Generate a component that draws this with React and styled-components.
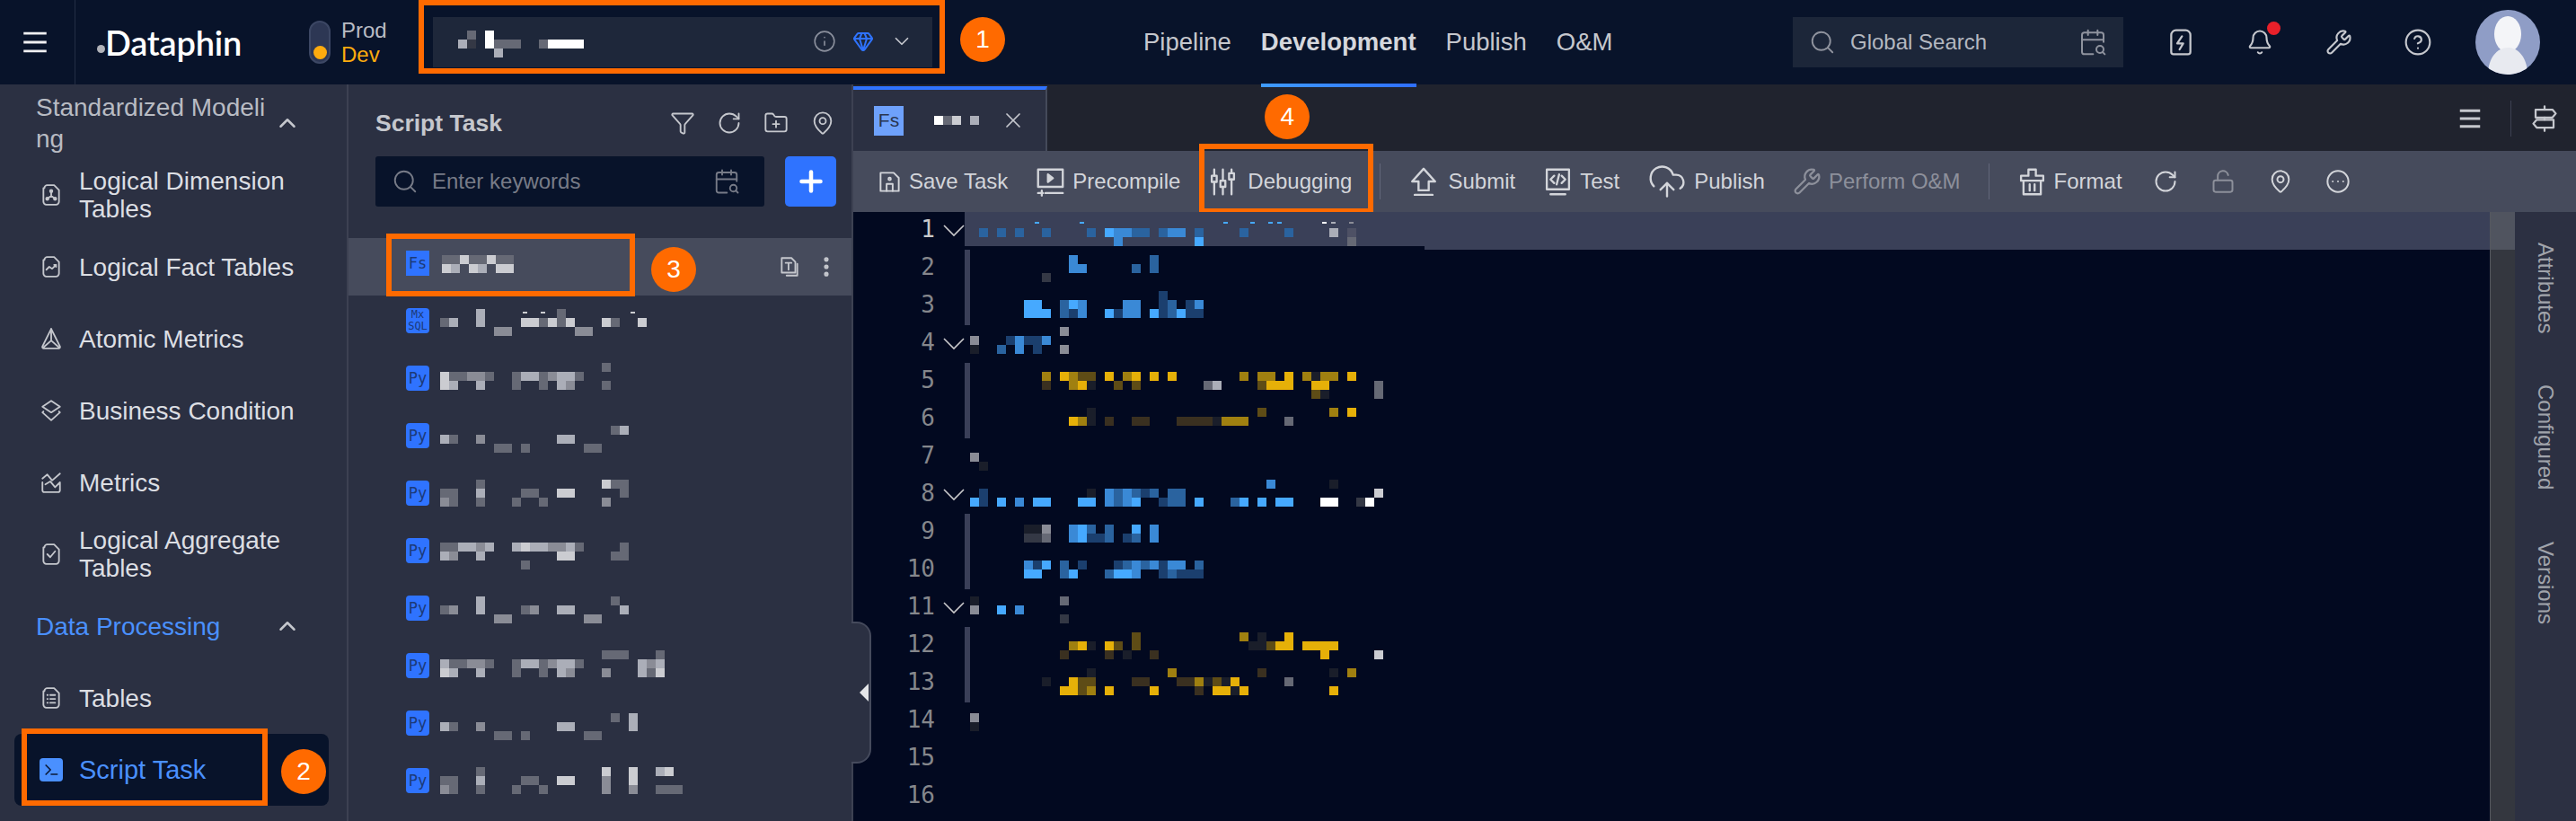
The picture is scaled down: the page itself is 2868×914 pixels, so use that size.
import React from "react";
import styled, { createGlobalStyle } from "styled-components";
import {
  Info, Gem, ChevronDown, ChevronUp, Search, CalendarSearch, Bell, Wrench, CircleHelp,
  Funnel, RotateCw, FolderPlus, MapPin, Plus, X, EllipsisVertical, CloudUpload,
  LockOpen, CircleEllipsis,
} from "lucide-react";

const GlobalStyle = createGlobalStyle`
  html, body { margin: 0; height: 100%; overflow: hidden; background: #2b3042; }
  body { font-family: "Liberation Sans", Arial, sans-serif; }
  * { box-sizing: border-box; }
`;

// mosaic colours: a-d blue, e-l grey, w-z yellow; an uppercase token is a thin tick
const palette = {
  a: "#1b3f6e", b: "#2a639f", c: "#3a89d6", d: "#46a9ff",
  e: "#1a1e2a", f: "#343845", g: "#666975", h: "#8a8c96", i: "#abaeb8", j: "#cbccd1", k: "#ffffff", l: "#4e5165",
  w: "#3a3020", x: "#5e4c16", y: "#a08010", z: "#e6b008",
};

const MosaicSvg = styled.svg`
  display: block;
  flex-shrink: 0;
  margin-top: ${(p) => p.$top || 0}px;
  margin-left: ${(p) => p.$left || 0}px;
`;

const Mosaic = ({ rows, top, left }) => {
  const cells = rows.flatMap((row, y) =>
    row.split(" ").filter(Boolean).map((token) => {
      const code = token[token.length - 1];
      const tick = code !== code.toLowerCase();
      return { x: parseInt(token, 10), y, tick, fill: palette[code.toLowerCase()] };
    })
  );
  const cols = Math.max(...cells.map((c) => c.x)) + 1;
  return (
    <MosaicSvg width={cols * 10} height={rows.length * 10} $top={top} $left={left} shapeRendering="crispEdges">
      {cells.map((c) => (
        <rect
          key={`${c.x}-${c.y}`}
          x={c.x * 10 + (c.tick ? 2 : 0)}
          y={c.y * 10 + (c.tick ? 3 : 0)}
          width={c.tick ? 5 : 10}
          height={c.tick ? 2 : 10}
          fill={c.fill}
        />
      ))}
    </MosaicSvg>
  );
};

const Glyph = ({ size = 28, w = 1.7, children, color = "currentColor" }) => (
  <svg width={size} height={size} viewBox="0 0 24 24" fill="none" stroke={color} strokeWidth={w} strokeLinejoin="round" strokeLinecap="round">
    {children}
  </svg>
);

const DOC = "M5 5a3 3 0 0 1 3-3h7l5 5v12a3 3 0 0 1-3 3H7a3 3 0 0 1-3-3V5z";

const icons = {
  tree: <><path d={DOC} /><path d="M12 8v5M12 13l-4 3M12 13l4 3" /><circle cx="12" cy="8" r="1.2" /><circle cx="8" cy="16" r="1.2" /><circle cx="16" cy="16" r="1.2" /></>,
  chartDoc: <><path d={DOC} /><path d="M7 15l3-3 3 2 4-4M15 10h2v2" /></>,
  atomic: <><path d="M12 2L3 20a1.5 1.5 0 0 0 1 2h16a1.5 1.5 0 0 0 1-2z" /><path d="M12 2v12L4 21M12 14l8 7" /></>,
  layers: <><path d="M12 2l9 6-9 6-9-6z" /><path d="M4 13l-1 1 9 8 9-8-1-1" /></>,
  metrics: <><path d="M3 12v8a2 2 0 0 0 2 2h14a2 2 0 0 0 2-2v-8l-5 5-5-6-5 3" /><path d="M3 8l5-4 5 6 8-7" /></>,
  checkDoc: <><path d={DOC} /><path d="M8 12l3 3 5-6" /></>,
  listDoc: <><path d={DOC} /><path d="M8 9h.5M11 9h5M8 13h.5M11 13h5M8 17h.5M11 17h5" /></>,
  save: <><path d="M3 3h13l5 5v13H3z" /><path d="M9 21v-7h6v7" /><circle cx="12" cy="9" r="1.2" /></>,
  precompile: <><rect x="2" y="2" width="20" height="14" /><path d="M10 6l4 3-4 3z" fill="currentColor" /><path d="M2 21h4M5 19v4M8 21h14" /></>,
  debug: <><path d="M5 2v5M5 12v10M12 2v9M12 16v6M19 2v3M19 10v12" /><rect x="3" y="7" width="4" height="5" /><rect x="10" y="11" width="4" height="5" /><rect x="17" y="5" width="4" height="5" /></>,
  submit: <><path d="M12 2l9 10h-5v7H8v-7H3z" /><path d="M5 22.5h14" /></>,
  test: <><rect x="3" y="2" width="18" height="16" /><path d="M9 7l-3 3 3 3M15 7l3 3-3 3M13 6l-2 8M6 22h12" /></>,
  format: <><path d="M9 2h6v5h6v4H3V7h6z" /><path d="M5 11v11h14V11M10 14v5M14 14v5" /></>,
  bolt: <><path d="M8 2h8a4 4 0 0 1 4 4v14a2 2 0 0 1-2 2H6a2 2 0 0 1-2-2V6a4 4 0 0 1 4-4z" /><path d="M13 7l-4 6h5l-3 5" /></>,
  copyT: <><path d="M4 3h10l4 4v11H4z" /><path d="M8 8h6M11 8v7M20 9v12H9" /></>,
  burger: <path d="M3 5h18M3 12h18M3 19h18" strokeLinecap="butt" />,
  signpost: <><path d="M12 1v3M12 11v2M12 20v3" /><path d="M4 4h15l3 3.5-3 3.5H4z" /><path d="M5 13h15v7H5l-3-3.5z" /></>,
};

const Shell = styled.div`
  display: flex;
  flex-direction: column;
  height: 100vh;
`;

const Header = styled.header`
  display: flex;
  align-items: center;
  height: 94px;
  flex-shrink: 0;
  background: #08132a;
  color: #c5c7cd;
`;

const MenuCell = styled.div`
  display: flex;
  align-items: center;
  justify-content: center;
  width: 84px;
  height: 100%;
  padding-right: 6px;
  color: #f0f0f2;
  border-right: 1px solid #232d44;
`;

const Logo = styled.div`
  display: flex;
  align-items: flex-end;
  margin-left: 24px;
  width: 160px;
  color: #fff;
  font-family: Lato, sans-serif;
  font-size: 38px;
  font-weight: 600;
  line-height: 46px;
  letter-spacing: -0.2px;
`;

const LogoDot = styled.span`
  width: 9px;
  height: 9px;
  margin: 0 0 11px 0;
  border-radius: 50%;
  background: #b0b2b8;
  flex-shrink: 0;
`;

const EnvTrack = styled.div`
  display: flex;
  align-items: flex-end;
  justify-content: center;
  width: 24px;
  height: 48px;
  margin-left: 76px;
  padding-bottom: 3px;
  border: 2px solid #3c4764;
  border-radius: 12px;
  background: #2d3754;
`;

const EnvKnob = styled.span`
  width: 15px;
  height: 15px;
  border-radius: 50%;
  background: #fdab0e;
`;

const EnvLabels = styled.div`
  display: flex;
  flex-direction: column;
  width: 52px;
  margin-left: 12px;
  font-size: 24px;
  line-height: 27px;
`;

const EnvLabel = styled.span`
  color: ${(p) => (p.$on ? "#fdab0e" : "#b9bcc4")};
`;

const Selector = styled.div`
  position: relative;
  display: flex;
  align-items: flex-start;
  gap: 18px;
  width: 556px;
  height: 56px;
  margin-left: 50px;
  padding: 15px 21px 0 28px;
  background: #1e273a;
`;

const SelectorIcons = styled.div`
  display: flex;
  align-items: center;
  gap: 18px;
  margin: -1px 0 0 auto;
  color: #8a8f9c;
`;

const Highlight = styled.div`
  position: absolute;
  top: ${(p) => p.$top}px;
  left: ${(p) => p.$left}px;
  width: ${(p) => p.$w}px;
  height: ${(p) => p.$h}px;
  border: 6px solid #ff6a00;
  pointer-events: none;
`;

const Step = styled.div`
  position: absolute;
  top: ${(p) => p.$top}px;
  left: ${(p) => p.$left}px;
  display: flex;
  align-items: center;
  justify-content: center;
  width: 50px;
  height: 50px;
  border-radius: 50%;
  background: #ff6a00;
  color: #fff;
  font-size: 28px;
`;

const Nav = styled.nav`
  display: flex;
  gap: 33px;
  height: 100%;
  margin-left: 235px;
`;

const NavItem = styled.a`
  position: relative;
  display: flex;
  align-items: center;
  font-size: 27.5px;
  font-weight: ${(p) => (p.$active ? 700 : 400)};
  color: ${(p) => (p.$active ? "#d5d7dc" : "#c5c7cd")};

  ${(p) =>
    p.$active &&
    `&::after {
      content: "";
      position: absolute;
      left: 0;
      right: 0;
      bottom: -3px;
      height: 4px;
      background: linear-gradient(90deg, #3f9cff, #2f6fff);
    }`}
`;

const HeaderRight = styled.div`
  display: flex;
  align-items: center;
  margin-left: auto;
  padding-right: 40px;
`;

const GlobalSearch = styled.div`
  display: flex;
  align-items: center;
  width: 368px;
  height: 56px;
  margin-right: 20px;
  padding: 0 18px;
  background: #1c2639;
  color: #8f939e;
`;

const GlobalSearchText = styled.span`
  flex: 1;
  margin-left: 16px;
  font-size: 24px;
  color: #b4b8c0;
`;

const HeaderIcon = styled.div`
  position: relative;
  display: flex;
  justify-content: center;
  width: 88px;
`;

const RedDot = styled.span`
  position: absolute;
  top: -8px;
  left: 52px;
  width: 15px;
  height: 15px;
  border-radius: 50%;
  background: #e8202a;
`;

const Avatar = styled.div`
  width: 72px;
  height: 72px;
  margin-left: 20px;
  border-radius: 50%;
  overflow: hidden;
  background: #8f9dc6;
`;

const Body = styled.div`
  display: flex;
  flex: 1;
  min-height: 0;
`;

const Sidebar = styled.aside`
  width: 388px;
  flex-shrink: 0;
  padding-top: 3px;
  background: #2b3042;
  border-right: 2px solid #3d4152;
  overflow: hidden;
`;

const Section = styled.div`
  display: grid;
  grid-template-columns: 265px 30px;
  align-items: center;
  height: 80px;
  padding-left: 40px;
  font-size: 28px;
  line-height: 35px;
  word-break: break-all;
  color: ${(p) => (p.$active ? "#4a90ff" : "#b8bbc3")};
  svg { color: #c5c7cd; }
`;

const SideItem = styled.div`
  display: flex;
  align-items: center;
  gap: 18px;
  height: 80px;
  padding-left: 44px;
  font-size: 28px;
  line-height: 31px;
  color: #dcdee3;
`;

const SideIcon = styled.span`
  display: flex;
  flex-shrink: 0;
  color: #c5c7cd;
`;

const SideText = styled.span`
  width: 270px;
`;

const ActiveItem = styled.div`
  position: relative;
  display: flex;
  align-items: center;
  gap: 18px;
  width: 350px;
  height: 80px;
  margin-left: 16px;
  padding-left: 28px;
  border-radius: 8px;
  background: #08132a;
  font-size: 29px;
  color: #4a90ff;
`;

const ScriptIcon = styled.span`
  display: flex;
  align-items: center;
  justify-content: center;
  width: 26px;
  height: 26px;
  border-radius: 4px;
  background: #4a90ff;
  color: #0b1a38;
`;

const TaskPanel = styled.section`
  width: 562px;
  flex-shrink: 0;
  background: #2b3042;
  border-right: 2px solid #3d4152;
  overflow: hidden;
`;

const PanelHead = styled.div`
  display: flex;
  align-items: center;
  height: 80px;
  padding: 6px 18px 0 30px;
`;

const PanelTitle = styled.h2`
  flex: 1;
  margin: 0;
  font-size: 26.5px;
  font-weight: 700;
  color: #c5c7cd;
`;

const PanelTools = styled.div`
  display: flex;
  gap: 24px;
  color: #c5c7cd;
`;

const SearchRow = styled.div`
  display: flex;
  gap: 23px;
  padding-left: 30px;
`;

const SearchBox = styled.div`
  display: flex;
  align-items: center;
  width: 433px;
  height: 56px;
  padding: 0 27px 0 18px;
  border-radius: 3px;
  background: #08132a;
  color: #777b87;
`;

const SearchInput = styled.input`
  flex: 1;
  min-width: 0;
  margin-left: 13px;
  border: 0;
  outline: 0;
  background: none;
  font: 24px "Liberation Sans", Arial, sans-serif;
  color: #c5c7cd;
  &::placeholder { color: #777b87; opacity: 1; }
`;

const AddButton = styled.button`
  display: flex;
  align-items: center;
  justify-content: center;
  width: 57px;
  height: 56px;
  padding: 0;
  border: 0;
  border-radius: 5px;
  background: #2f73ff;
  color: #fff;
`;

const TreeList = styled.div`
  margin-top: 35px;
`;

const TreeRow = styled.div`
  position: relative;
  display: flex;
  align-items: flex-start;
  gap: 12px;
  height: 64px;
  padding-left: 64px;
  background: ${(p) => (p.$selected ? "#464b5c" : "transparent")};
`;

const FileIcon = styled.span`
  display: flex;
  flex-direction: column;
  align-items: center;
  justify-content: center;
  flex-shrink: 0;
  width: 26px;
  height: 28px;
  margin-top: 14px;
  border-radius: ${(p) => (p.$square ? 0 : 4)}px;
  background: #2f73ff;
  color: #1c3a78;
  font-family: "DejaVu Sans Mono", monospace;
  font-size: ${(p) => (p.$small ? 12 : 17)}px;
  line-height: ${(p) => (p.$small ? 13 : 20)}px;
`;

const TreeActions = styled.div`
  display: flex;
  align-items: center;
  gap: 14px;
  margin: 18px 14px 0 auto;
  color: #c5c7cd;
`;

const Main = styled.main`
  display: flex;
  flex-direction: column;
  flex: 1;
  min-width: 0;
`;

const TabBar = styled.div`
  display: flex;
  align-items: stretch;
  justify-content: space-between;
  height: 74px;
  flex-shrink: 0;
  padding-top: 2px;
  background: #20232e;
`;

const Tab = styled.div`
  display: flex;
  align-items: center;
  width: 216px;
  padding-left: 23px;
  border-top: 4px solid #2f73ff;
  border-right: 2px solid #444a5a;
  background: #2b3042;
  color: #c5c7cd;
`;

const TabIcon = styled.span`
  display: flex;
  align-items: center;
  justify-content: center;
  flex-shrink: 0;
  width: 33px;
  height: 33px;
  background: #6ea1fb;
  color: #2a3550;
  font-family: "Liberation Sans", Arial, sans-serif;
  font-size: 21px;
`;

const TabTitle = styled.div`
  margin-left: 34px;
  width: 74px;
`;

const TabRight = styled.div`
  display: flex;
  align-items: center;
  padding-right: 20px;
  color: #c5c7cd;
`;

const TabDivider = styled.span`
  width: 1px;
  height: 40px;
  margin: 0 22px 0 30px;
  background: #3d4152;
`;

const Toolbar = styled.div`
  display: flex;
  align-items: center;
  gap: 31px;
  height: 68px;
  flex-shrink: 0;
  padding-left: 27px;
  background: #464b5c;
`;

const ToolItem = styled.div`
  position: relative;
  display: flex;
  align-items: center;
  gap: ${(p) => p.$gap || 8}px;
  font-size: 24px;
  color: ${(p) => (p.$muted ? "#8d909b" : "#d3d5da")};
`;

const ToolDivider = styled.span`
  width: 1px;
  height: 40px;
  background: #62667a;
`;

const ToolIcons = styled.div`
  display: flex;
  align-items: center;
  gap: 36px;
  margin-left: 3px;
  color: #d3d5da;
`;

const EditorArea = styled.div`
  position: relative;
  display: flex;
  flex: 1;
  min-height: 0;
  background: #020920;
`;

const Code = styled.div`
  flex: 1;
  min-width: 0;
  overflow: hidden;
`;

const Line = styled.div`
  display: flex;
  height: 42px;
`;

const LineNo = styled.span`
  width: 91px;
  flex-shrink: 0;
  text-align: right;
  font-family: "DejaVu Sans Mono", monospace;
  font-size: 26px;
  line-height: 38px;
  color: ${(p) => (p.$active ? "#c9c9cb" : "#85878c")};
`;

const FoldCell = styled.span`
  display: flex;
  align-items: center;
  justify-content: flex-end;
  width: 33px;
  flex-shrink: 0;
  color: #c9c9cb;
`;

const LineBody = styled.div`
  position: relative;
  display: flex;
  flex: 1;
  min-width: 0;
  background: ${(p) => (p.$active ? "#3a4058" : "transparent")};

  ${(p) =>
    p.$active &&
    `&::after {
      content: "";
      position: absolute;
      left: 0;
      bottom: 0;
      width: 512px;
      height: 4px;
      background: #020920;
    }`}
`;

const Guide = styled.span`
  width: 6px;
  flex-shrink: 0;
  background: ${(p) => (p.$on ? "#3a3f58" : "transparent")};
`;

const ScrollStrip = styled.div`
  width: 28px;
  flex-shrink: 0;
  border-left: 1px solid #55585f;
  background: linear-gradient(#50545f 42px, #34373f 42px);
`;

const SideTabs = styled.div`
  display: flex;
  flex-direction: column;
  align-items: center;
  gap: 57px;
  width: 68px;
  flex-shrink: 0;
  padding-top: 34px;
  background: #2c3042;
`;

const SideTab = styled.span`
  writing-mode: vertical-rl;
  font-size: 24px;
  line-height: 28px;
  color: #a0a3ab;
`;

const CollapseHandle = styled.div`
  position: absolute;
  top: 456px;
  left: -2px;
  display: flex;
  align-items: center;
  justify-content: flex-end;
  width: 22px;
  height: 158px;
  padding-right: 1px;
  border: 2px solid #454a5c;
  border-left: 0;
  border-radius: 0 16px 16px 0;
  background: #2b3042;
  color: #e4e5e8;
`;

const HandleArrow = styled.span`
  width: 0;
  height: 0;
  border-top: 10px solid transparent;
  border-bottom: 10px solid transparent;
  border-right: 10px solid currentColor;
`;

const FoldMark = () => (
  <svg width="24" height="14" viewBox="0 0 24 14" fill="none" stroke="currentColor" strokeWidth="1.6">
    <path d="M1 1l11 11L23 1" />
  </svg>
);

const sideItems = [
  { icon: "tree", label: "Logical Dimension Tables" },
  { icon: "chartDoc", label: "Logical Fact Tables" },
  { icon: "atomic", label: "Atomic Metrics" },
  { icon: "layers", label: "Business Condition" },
  { icon: "metrics", label: "Metrics" },
  { icon: "checkDoc", label: "Logical Aggregate Tables" },
];

const tasks = [
  { type: "Mx", top: 15, rows: ["4i 9J 11J 13g 21J", "0g 1i 4i 9j 10j 11g 12j 13g 14j 18j 19g 22j", "6h 7h 15h 16h"] },
  { type: "Py", top: 11, rows: ["18g", "0j 1g 2g 3h 4h 5g 8g 9i 10i 11g 12h 13i 14i 15g", "0j 1i 4i 8g 11g 13i 14h 18g"] },
  { type: "Py", top: 17, rows: ["19g 20i", "0i 1g 4h 13i 14i", "6g 7g 9g 16g 17g"] },
  { type: "Py", top: 13, rows: ["4g 18j 19g 20g", "0g 1g 4i 9g 10g 13j 14j 20g", "0h 1g 4g 8g 11g 18h"] },
  { type: "Py", top: 19, rows: ["0g 1g 2i 3i 4h 5i 8i 9j 10i 11i 12h 13h 14i 15g 20g", "0i 1h 4i 13j 14j 19g 20g", "9g"] },
  { type: "Py", top: 15, rows: ["4i 19g", "0g 1h 4i 9g 10h 13i 14i 20i", "6h 7h 16h 17h"] },
  { type: "Py", top: 11, rows: ["18g 19g 20g 24g", "0i 1g 2g 3h 4h 5g 8g 9i 10i 11g 12h 13i 14i 15g 22i 23h 24i", "0j 1i 4i 8g 11g 13i 14h 18h 22i 23g 24j"] },
  { type: "Py", top: 17, rows: ["19g 21i", "0i 1g 4h 13i 14i 21i", "6g 7g 9g 16g 17g"] },
  { type: "Py", top: 13, rows: ["4g 18j 21j 24i 25j", "0g 1g 4i 9g 10g 13j 14j 18h 21j", "0h 1g 4g 8g 11g 18h 21h 24g 25g 26g"] },
];

const codeLines = [
  { top: 8, fold: true, rows: ["7D 12D 28D 31D 33D 34D 39K 40I 42H", "1b 3b 5b 8b 13b 15d 16c 17c 18b 19b 21b 22c 23c 25b 30b 35b 40i 42l", "16c 25d 42g"] },
  { top: 6, guide: true, rows: ["11c 20b", "11c 12c 18b 20b", "8f"] },
  { top: 4, guide: true, rows: ["21a", "6d 7d 10b 11d 12c 17c 18c 21a 22b 24a 25c", "6d 7d 8d 10b 11a 12c 15d 16a 17c 18c 20d 21a 22b 23d 24a 25a"] },
  { top: 2, fold: true, rows: ["10h", "0h 4a 5c 6a 7a 8c", "0e 3b 5c 7a 10h"] },
  { top: 10, guide: true, rows: ["8y 10z 11y 12x 13x 15z 17y 18z 20z 22z 30y 32y 33y 35z 37y 38e 39y 40y 42z", "8w 11y 12z 13e 16x 18x 26g 27i 32x 33z 34z 35z 38z 39z 45g", "38x 39e 45g"] },
  { top: 8, guide: true, rows: ["13e 32x 40y 42z", "11z 12y 13e 15w 18w 19w 23w 24w 25w 26w 27e 28y 29y 30y 35g"] },
  { top: 16, rows: ["0h", "1e"] },
  { top: 4, fold: true, rows: ["33c 40e", "1a 13e 15c 16b 17c 18b 19a 20b 22b 23b 45j", "0d 1a 3d 5c 7d 8d 12d 13d 15c 16b 17c 18d 21a 22b 23b 25d 29b 30d 32d 34d 35d 39k 40k 43f 44k"] },
  { top: 12, guide: true, rows: ["6e 7e 8h 11c 12d 13b 15b 18d 20c", "6f 7f 8g 11c 12d 13a 14a 15b 17a 18b 20c"] },
  { top: 10, guide: true, rows: ["6c 7a 8d 10b 12a 16a 17b 18c 19b 20c 21a 22c 23c 25b", "6d 7d 10b 11d 15b 16d 17d 18c 21a 22b 23a 24a 25a"] },
  { top: 8, fold: true, rows: ["0e 10g", "0h 3d 5c", "10f"] },
  { top: 6, guide: true, rows: ["18x 30y 32e 35z", "11y 12z 13e 15z 16x 18x 31e 32e 33x 34z 35z 37z 38z 39z 40z", "10w 15w 17e 20w 39z 45j"] },
  { top: 4, guide: true, rows: ["13e 22y 32w 40e 42y", "8e 11z 12x 13x 18w 19w 23w 24w 25y 26e 27x 28e 29z 35g", "10z 11z 12x 13y 15z 20z 25w 27z 28z 29e 30z 40z"] },
  { top: 12, rows: ["0h", "0e"] },
  { rows: [] },
  { rows: [] },
];

const toolsLeft = [
  { icon: "save", label: "Save Task", size: 27 },
  { icon: "precompile", label: "Precompile", size: 33 },
];

export default function App() {
  return (
    <Shell>
      <GlobalStyle />
      <Header>
        <MenuCell>
          <Glyph size={34} w={2}>{icons.burger}</Glyph>
        </MenuCell>
        <Logo>
          <LogoDot />
          Dataphin
        </Logo>
        <EnvTrack>
          <EnvKnob />
        </EnvTrack>
        <EnvLabels>
          <EnvLabel>Prod</EnvLabel>
          <EnvLabel $on>Dev</EnvLabel>
        </EnvLabels>
        <Selector>
          <Mosaic rows={["1g 3k", "0i 1f 3k 4g 5g 6g 9g 10k 11k 12k 13k", "4i"]} />
          <SelectorIcons>
            <Info size={26} strokeWidth={1.5} />
            <Gem size={24} strokeWidth={2} color="#2f73ff" />
            <ChevronDown size={26} strokeWidth={1.6} color="#c5c7cd" />
          </SelectorIcons>
          <Highlight $top={-19} $left={-16} $w={586} $h={82} />
          <Step $top={0} $left={587}>1</Step>
        </Selector>
        <Nav>
          <NavItem>Pipeline</NavItem>
          <NavItem $active>Development</NavItem>
          <NavItem>Publish</NavItem>
          <NavItem>O&amp;M</NavItem>
        </Nav>
        <HeaderRight>
          <GlobalSearch>
            <Search size={30} strokeWidth={1.5} />
            <GlobalSearchText>Global Search</GlobalSearchText>
            <CalendarSearch size={32} strokeWidth={1.5} />
          </GlobalSearch>
          <HeaderIcon><Glyph size={32}>{icons.bolt}</Glyph></HeaderIcon>
          <HeaderIcon>
            <Bell size={30} strokeWidth={1.7} />
            <RedDot />
          </HeaderIcon>
          <HeaderIcon><Wrench size={30} strokeWidth={1.7} /></HeaderIcon>
          <HeaderIcon><CircleHelp size={32} strokeWidth={1.6} /></HeaderIcon>
          <Avatar>
            <svg width="72" height="72" viewBox="0 0 72 72">
              <ellipse cx="36" cy="27" rx="15" ry="20" fill="#f4f5f8" />
              <path d="M14 72c0-18 10-30 22-30s22 12 22 30z" fill="#e8eaf0" />
            </svg>
          </Avatar>
        </HeaderRight>
      </Header>
      <Body>
        <Sidebar>
          <Section>
            <span>Standardized Modeling</span>
            <ChevronUp size={30} strokeWidth={2} />
          </Section>
          {sideItems.map((item) => (
            <SideItem key={item.label}>
              <SideIcon><Glyph size={26}>{icons[item.icon]}</Glyph></SideIcon>
              <SideText>{item.label}</SideText>
            </SideItem>
          ))}
          <Section $active>
            <span>Data Processing</span>
            <ChevronUp size={30} strokeWidth={2} />
          </Section>
          <SideItem>
            <SideIcon><Glyph size={26}>{icons.listDoc}</Glyph></SideIcon>
            <SideText>Tables</SideText>
          </SideItem>
          <ActiveItem>
            <ScriptIcon>
              <Glyph size={20} w={2}><path d="M5 6l6 6-6 6M12 18h8" /></Glyph>
            </ScriptIcon>
            Script Task
            <Highlight $top={-6} $left={8} $w={274} $h={86} />
            <Step $top={17} $left={297}>2</Step>
          </ActiveItem>
        </Sidebar>

        <TaskPanel>
          <PanelHead>
            <PanelTitle>Script Task</PanelTitle>
            <PanelTools>
              <Funnel size={28} strokeWidth={1.6} />
              <RotateCw size={28} strokeWidth={1.6} />
              <FolderPlus size={28} strokeWidth={1.6} />
              <MapPin size={28} strokeWidth={1.6} />
            </PanelTools>
          </PanelHead>
          <SearchRow>
            <SearchBox>
              <Search size={30} strokeWidth={1.5} />
              <SearchInput placeholder="Enter keywords" />
              <CalendarSearch size={30} strokeWidth={1.5} />
            </SearchBox>
            <AddButton><Plus size={36} strokeWidth={3} /></AddButton>
          </SearchRow>
          <TreeList>
            <TreeRow $selected>
              <FileIcon $square>Fs</FileIcon>
              <Mosaic top={19} left={2} rows={["0g 1g 2j 3g 4g 5j 6g 7g", "0j 1i 3j 4i 6j 7j"]} />
              <TreeActions>
                <Glyph size={26}>{icons.copyT}</Glyph>
                <EllipsisVertical size={28} strokeWidth={2.4} />
              </TreeActions>
              <Highlight $top={-5} $left={42} $w={277} $h={70} />
              <Step $top={10} $left={337}>3</Step>
            </TreeRow>
            {tasks.map((task, i) => (
              <TreeRow key={i}>
                {task.type === "Mx" ? (
                  <FileIcon $small>
                    <span>Mx</span>
                    <span>SQL</span>
                  </FileIcon>
                ) : (
                  <FileIcon>{task.type}</FileIcon>
                )}
                <Mosaic top={task.top} rows={task.rows} />
              </TreeRow>
            ))}
          </TreeList>
        </TaskPanel>

        <Main>
          <TabBar>
            <Tab>
              <TabIcon>Fs</TabIcon>
              <TabTitle><Mosaic rows={["0k 1g 2j 4i"]} /></TabTitle>
              <X size={28} strokeWidth={1.5} />
            </Tab>
            <TabRight>
              <Glyph size={30} w={2.4}>{icons.burger}</Glyph>
              <TabDivider />
              <Glyph size={30} w={1.8}>{icons.signpost}</Glyph>
            </TabRight>
          </TabBar>
          <Toolbar>
            {toolsLeft.map((t) => (
              <ToolItem key={t.label}>
                <Glyph size={t.size}>{icons[t.icon]}</Glyph>
                {t.label}
              </ToolItem>
            ))}
            <ToolItem $gap={11}>
              <Glyph size={33}>{icons.debug}</Glyph>
              Debugging
              <Highlight $top={-26} $left={-10} $w={194} $h={78} />
              <Step $top={-81} $left={63}>4</Step>
            </ToolItem>
            <ToolDivider />
            <ToolItem $gap={10}>
              <Glyph size={34}>{icons.submit}</Glyph>
              Submit
            </ToolItem>
            <ToolItem>
              <Glyph size={33}>{icons.test}</Glyph>
              Test
            </ToolItem>
            <ToolItem>
              <CloudUpload size={44} strokeWidth={1.3} />
              Publish
            </ToolItem>
            <ToolItem $muted>
              <Wrench size={32} strokeWidth={1.7} />
              Perform O&amp;M
            </ToolItem>
            <ToolDivider />
            <ToolItem>
              <Glyph size={33}>{icons.format}</Glyph>
              Format
            </ToolItem>
            <ToolIcons>
              <RotateCw size={28} strokeWidth={1.7} />
              <LockOpen size={28} strokeWidth={1.7} color="#8d909b" />
              <MapPin size={28} strokeWidth={1.7} />
              <CircleEllipsis size={28} strokeWidth={1.7} />
            </ToolIcons>
          </Toolbar>
          <EditorArea>
            <Code>
              {codeLines.map((line, i) => (
                <Line key={i}>
                  <LineNo $active={i === 0}>{i + 1}</LineNo>
                  <FoldCell>{line.fold && <FoldMark />}</FoldCell>
                  <LineBody $active={i === 0}>
                    <Guide $on={line.guide} />
                    {line.rows.length > 0 && <Mosaic top={line.top} rows={line.rows} />}
                  </LineBody>
                </Line>
              ))}
            </Code>
            <ScrollStrip />
            <SideTabs>
              <SideTab>Attributes</SideTab>
              <SideTab>Configured</SideTab>
              <SideTab>Versions</SideTab>
            </SideTabs>
            <CollapseHandle><HandleArrow /></CollapseHandle>
          </EditorArea>
        </Main>
      </Body>
    </Shell>
  );
}
